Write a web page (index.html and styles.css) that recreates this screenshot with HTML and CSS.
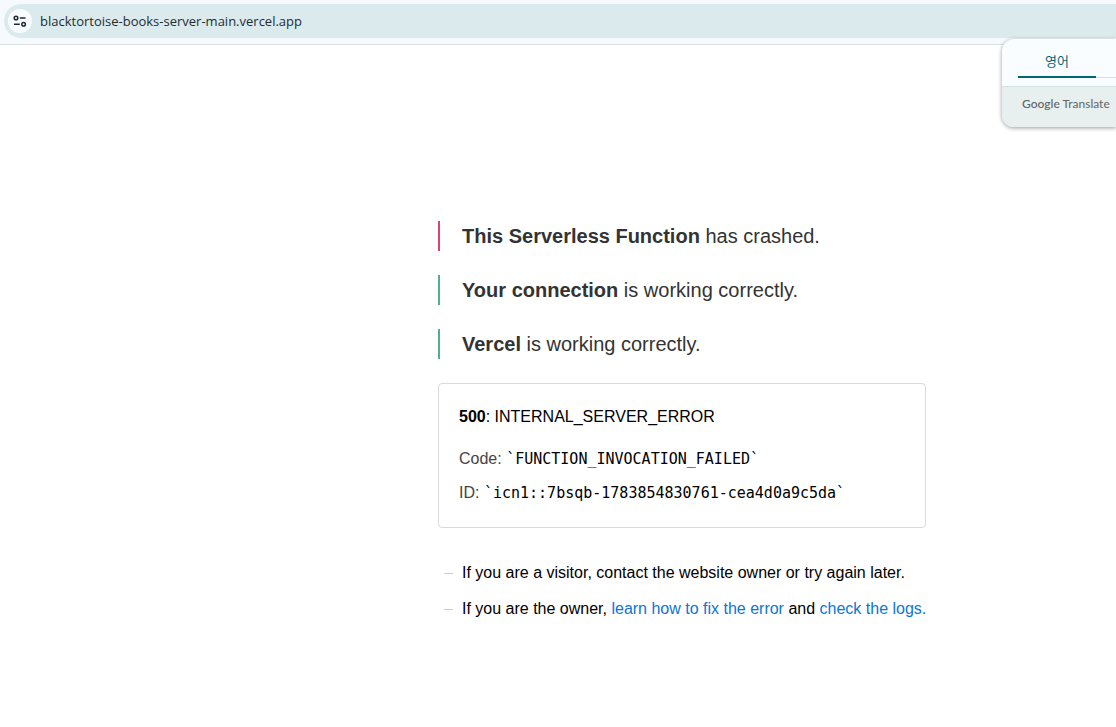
FILE: index.html
```html
<!DOCTYPE html>
<html lang="en">
<head>
<meta charset="utf-8">
<meta name="viewport" content="width=device-width, initial-scale=1">
<title>500: INTERNAL_SERVER_ERROR</title>
<link rel="stylesheet" href="styles.css">
</head>
<body>
<header class="toolbar">
  <div class="omnibox">
    <button class="site-info" type="button" aria-label="View site information">
      <svg width="14" height="14" viewBox="0 0 14 14" fill="none" stroke="#1f2a30" stroke-width="1.5" aria-hidden="true">
        <circle cx="3" cy="4" r="1.8"/>
        <path d="M6.8 4H12.5M1 10.2H6.8"/>
        <circle cx="10.6" cy="10.2" r="1.8"/>
      </svg>
    </button>
    <input class="address" type="text" aria-label="Address" value="blacktortoise-books-server-main.vercel.app">
  </div>
</header>
<aside class="translate" aria-label="Translate">
  <div class="translate-tabs"><button class="tab" type="button">영어</button></div>
  <div class="translate-brand"><span class="brand-name">Google</span> Translate</div>
</aside>
<main class="page">
  <div class="content">
    <ul class="status-list">
      <li class="status status-error"><strong>This Serverless Function</strong> has crashed.</li>
      <li class="status"><strong>Your connection</strong> is working correctly.</li>
      <li class="status"><strong>Vercel</strong> is working correctly.</li>
    </ul>
    <section class="details">
      <p class="details-title"><strong>500</strong>: INTERNAL_SERVER_ERROR</p>
      <p class="detail">Code: <code>`FUNCTION_INVOCATION_FAILED`</code></p>
      <p class="detail">ID: <code>`icn1::7bsqb-1783854830761-cea4d0a9c5da`</code></p>
    </section>
    <ul class="hints">
      <li>If you are a visitor, contact the website owner or try again later.</li>
      <li>If you are the owner, <a href="#fix">learn how to fix the error</a> and <a href="#logs">check the logs.</a></li>
    </ul>
  </div>
</main>
</body>
</html>
```
FILE: styles.css
```css
* { box-sizing: border-box; }

body {
  margin: 0;
  background: #fff;
  color: #000;
  font-family: "Liberation Sans", Arial, sans-serif;
  font-size: 16px;
  overflow-x: hidden;
}

ul, p { margin: 0; padding: 0; }
ul { list-style: none; }

.toolbar {
  padding: 4px 0 6px 4px;
  background: #f6fafd;
  border-bottom: 1px solid #dde3e5;
}

.omnibox {
  display: flex;
  align-items: center;
  gap: 8px;
  height: 34px;
  padding-left: 4px;
  background: #dbeaed;
  border-radius: 17px 0 0 17px;
}

.site-info {
  display: flex;
  align-items: center;
  justify-content: center;
  width: 24px;
  height: 24px;
  padding: 0;
  border: 0;
  border-radius: 50%;
  background: #fafdff;
}

.address {
  flex: 1;
  min-width: 0;
  padding: 0;
  border: 0;
  background: transparent;
  color: #1f2d33;
  font-family: "Open Sans", sans-serif;
  font-size: 13px;
}

.translate {
  position: absolute;
  top: 39px;
  right: 0;
  width: 114px;
  overflow: hidden;
  border-radius: 12px 0 0 12px;
  background: #f9fdff;
  box-shadow: 0 1px 4px rgba(0, 0, 0, 0.4);
}

.translate-tabs {
  display: flex;
  margin-left: 16px;
  padding-bottom: 8px;
}

.translate-tabs::after {
  content: "";
  flex: 1;
  border-bottom: 1px solid #d3dfe2;
}

.tab {
  width: 78px;
  height: 39px;
  padding: 6px 0 0;
  border: 0;
  border-bottom: 2px solid #006874;
  background: transparent;
  color: #006874;
  font-family: "Noto Sans CJK KR", sans-serif;
  font-size: 13px;
}

.translate-brand {
  height: 41px;
  padding-left: 20px;
  border-top: 1px solid #d5e0e2;
  background: #e8efef;
  color: #5f6568;
  font-family: Lato, sans-serif;
  font-size: 12px;
  line-height: 34px;
  white-space: nowrap;
}

.brand-name { font-weight: 500; }

.page {
  display: flex;
  padding: 176px 0 32px 438px;
}

.content { width: 488px; }

.status-list {
  display: grid;
  gap: 24px;
  margin-bottom: 24px;
}

.status {
  padding-left: 22px;
  border-left: 2px solid #50b094;
  color: #333;
  font-size: 20px;
  line-height: 30px;
}

.status-error { border-color: #de3f78; }

.details {
  padding: 20px 20px 17px;
  border: 1px solid #dadada;
  border-radius: 4px;
}

.details-title {
  margin-bottom: 12px;
  line-height: 26px;
}

.detail {
  color: #444;
  line-height: 33px;
}

.detail code {
  color: #000;
  font-family: "DejaVu Sans Mono", monospace;
  font-size: 15px;
}

.hints {
  display: grid;
  gap: 12px;
  margin-top: 33px;
  line-height: 24px;
  white-space: nowrap;
}

.hints li {
  display: flex;
  align-items: center;
  white-space: pre;
}

.hints li::before {
  content: "";
  width: 9px;
  height: 1px;
  margin: 0 9px 0 6px;
  background: #ccc;
}

.hints a {
  color: #0b75d8;
  text-decoration: none;
}
```
